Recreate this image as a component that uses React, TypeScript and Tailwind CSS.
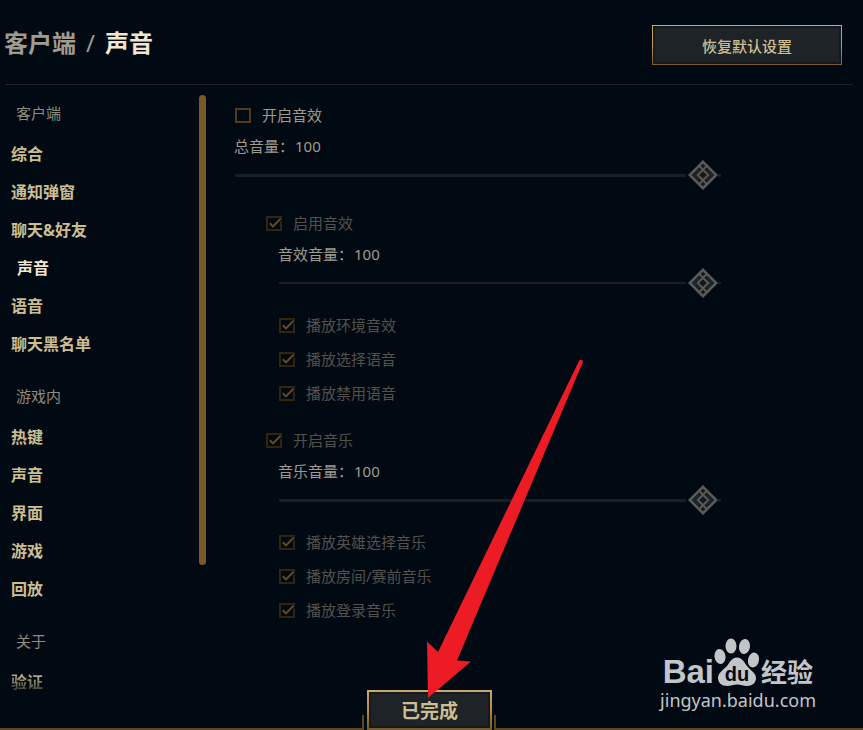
import React, { useState } from "react";
import clsx from "clsx";

const MENU = [
  {
    title: "客户端",
    items: ["综合", "通知弹窗", "聊天&好友", "声音", "语音", "聊天黑名单"],
  },
  { title: "游戏内", items: ["热键", "声音", "界面", "游戏", "回放"] },
  { title: "关于", items: ["验证"] },
];

const Header = () => (
  <header className="ml-1 mr-[10px] flex items-center justify-between pt-[25px] pr-[11px] pb-[19px]">
    <h1 className="flex items-center pb-1 text-2xl leading-9 font-bold">
      <span className="text-[#a09b8c]">客户端</span>
      <span className="mx-[10px] font-normal text-[#a09b8c]">/</span>
      <span className="text-[#f0e6d2]">声音</span>
    </h1>
    <button className="h-10 w-[190px] bg-linear-to-b from-[#c8aa6e] via-[#c89b3c] to-[#785a28] p-px">
      <span className="flex h-full items-center justify-center border-2 border-[#15191e] bg-[#1e2328] pt-[2px] text-[15px] font-medium text-[#cdbe91]">
        恢复默认设置
      </span>
    </button>
  </header>
);

const Sidebar = () => {
  const [active, setActive] = useState("0-3");
  return (
    <nav className="flex w-[199px] shrink-0 flex-col gap-[13px] pt-2">
      {MENU.map((group, g) => (
        <section key={group.title}>
          <h2 className="h-[42px] pl-4 text-[15px] leading-10 text-[#8f8b7e]">
            {group.title}
          </h2>
          <ul>
            {group.items.map((item, i) => {
              const id = `${g}-${i}`;
              return (
                <li key={id} className="h-[38px]">
                  <button
                    onClick={() => setActive(id)}
                    className={clsx(
                      "text-base leading-[38px] font-bold",
                      active === id
                        ? "pl-[17px] text-[#f0e6d2]"
                        : "pl-[11px]",
                      active !== id && g < 2 && "text-[#cdbe91]",
                      // last entry runs into the bottom fade
                      g === 2 &&
                        "bg-linear-to-b from-[#b5a982] from-35% to-[#3a3a35] to-75% bg-clip-text text-transparent"
                    )}
                  >
                    {item}
                  </button>
                </li>
              );
            })}
          </ul>
        </section>
      ))}
    </nav>
  );
};

type CheckProps = {
  label: string;
  dim?: boolean;
  defaultChecked?: boolean;
  className?: string;
};

const Check = ({ label, dim, defaultChecked, className }: CheckProps) => (
  <label
    className={clsx(
      "flex items-center gap-[11px] text-[15px]",
      dim ? "text-[#53514b]" : "text-[#a09b8c]",
      className
    )}
  >
    <span className="relative h-[15px] w-4 shrink-0">
      <input
        type="checkbox"
        defaultChecked={defaultChecked}
        className={clsx(
          "peer block h-full w-full appearance-none border-2",
          dim ? "border-[#33240f]" : "border-[#513c1a]"
        )}
      />
      <svg
        viewBox="0 0 16 15"
        className="pointer-events-none absolute inset-0 hidden peer-checked:block"
      >
        <path d="M3.5 7.5 7 10.8 14.8 2.8" fill="none" stroke="#010a13" strokeWidth="4" />
        <path d="M3.8 7.2 7 10.4 14.6 2.8" fill="none" stroke="#654b22" strokeWidth="2" />
      </svg>
    </span>
    <span>{label}</span>
  </label>
);

type VolumeProps = { label: string; thin?: boolean };

const Volume = ({ label, thin }: VolumeProps) => {
  const [value, setValue] = useState(100);
  return (
    <label className="block">
      <span className="block h-8 text-[15px] leading-[30px] text-[#a09b8c]">
        {label}：<span className="ml-px">{value}</span>
      </span>
      <span className="relative ml-px flex h-6 items-center">
        <span
          className={clsx("flex-1 bg-[#1a1e24]", thin ? "h-[2px]" : "h-[3px]")}
        />
        <svg viewBox="0 0 30 30" className="ml-[2px] h-[30px] w-[30px] shrink-0">
          <g fill="none" stroke="#5b5a56">
            <path d="M15 1.8 28.2 15 15 28.2 1.8 15Z" fill="#12181f" strokeWidth="2.6" />
            <path d="M11 9.5 6 15 11 20.5M19 9.5 24 15 19 20.5" stroke="#1f2429" strokeWidth="2.5" />
            <path d="M11.5 6.2 15 9.7 18.5 6.2M11.5 23.8 15 20.3 18.5 23.8" strokeWidth="2" />
            <path d="M15 9.7 20.3 15 15 20.3 9.7 15Z" strokeWidth="2" />
          </g>
        </svg>
        <span className={clsx("w-[3px] bg-[#1a1e24]", thin ? "h-[2px]" : "h-[3px]")} />
        <input
          type="range"
          min={0}
          max={100}
          value={value}
          onChange={(e) => setValue(Number(e.target.value))}
          className="absolute inset-0 w-full opacity-0"
        />
      </span>
    </label>
  );
};

type GroupProps = {
  title: string;
  volume: string;
  thin?: boolean;
  options: string[];
};

const SoundGroup = ({ title, volume, thin, options }: GroupProps) => (
  <section>
    <Check label={title} dim defaultChecked className="ml-8 h-8" />
    <div className="ml-11">
      <Volume label={volume} thin={thin} />
    </div>
    <div className="mt-[13px] ml-[45px]">
      {options.map((o) => (
        <Check key={o} label={o} dim defaultChecked className="h-[34px]" />
      ))}
    </div>
  </section>
);

const Footer = () => (
  <footer className="absolute inset-x-0 bottom-0 grid grid-cols-[364fr_auto_369fr] items-end">
    <div className="h-[15px] border-r-2 border-b-2 border-[#604619]" />
    <button className="mr-[2px] ml-[3px] h-10 w-[125px] bg-linear-to-b from-[#c8aa6e] via-[#b88d3c] to-[#785a28] p-[2px]">
      <span className="flex h-full items-center justify-center border-2 border-[#15191e] bg-[#1e2328] pt-[2px] text-[19px] leading-6 font-bold text-[#cdbe91]">
        已完成
      </span>
    </button>
    <div className="h-[15px] border-b-2 border-l-2 border-[#604619]" />
  </footer>
);

const Arrow = () => (
  <svg
    viewBox="0 0 160 345"
    className="pointer-events-none absolute top-[356px] left-[425px] h-[345px] w-40"
  >
    <path
      d="M154 5Q156 2 158 5L157 8 32 304.500 46 305.500 3 342 2 285.500 13 296Z"
      fill="#ed1c24"
    />
  </svg>
);

const Watermark = () => (
  <div className="pointer-events-none absolute right-[47px] bottom-[18px] text-[#c3c6c8]">
    <div className="flex h-12 items-end justify-end pr-[3px]">
      <span className="font-['Liberation_Sans',sans-serif] text-[33px] leading-7 font-bold">
        Bai
      </span>
      <svg viewBox="0 0 47 48" className="h-12 w-[47px]" fill="#c3c6c8">
        <ellipse cx="6" cy="18.5" rx="5.5" ry="7.5" transform="rotate(-8 6 18.5)" />
        <ellipse cx="17" cy="8" rx="5.5" ry="7.5" />
        <ellipse cx="30.5" cy="8.5" rx="5.5" ry="7.5" transform="rotate(8 30.5 8.5)" />
        <ellipse cx="39.5" cy="22" rx="5.5" ry="7.5" transform="rotate(12 39.5 22)" />
        <path d="M23 19.5C28 19.5 30 24 33 28 37 33 42 35 42 40 42 45 38 48 33 48 29 48 27 46.500 23 46.500S17 48 13 48C8 48 4 45 4 40 4 35 9 32 13 28 16 24 18 19.500 23 19.500Z" />
        <text
          x="23"
          y="43"
          textAnchor="middle"
          fontSize="20"
          fontWeight="bold"
          fontFamily="Liberation Sans, sans-serif"
          fill="#010a13"
        >
          du
        </text>
      </svg>
      <span className="text-[26px] leading-7 font-bold">经验</span>
    </div>
    <div className="mt-[2px] text-lg leading-6">jingyan.baidu.com</div>
  </div>
);

const App = () => {
  return (
    <div
      lang="zh-CN"
      className="relative min-h-screen overflow-hidden bg-[#010a13] font-['Noto_Sans','Noto_Sans_CJK_SC',sans-serif]"
    >
      <Header />
      <hr className="mr-[10px] ml-[5px] border-[#1e2328]" />
      <div className="flex items-start">
        <Sidebar />
        <div className="mt-[10px] h-[470px] w-[7px] shrink-0 rounded-full bg-[#785a28]" />
        <main className="ml-7 flex flex-1 flex-col pt-[14px] pr-[142px]">
          <Check label="开启音效" className="ml-px h-8" />
          <Volume label="总音量" />
          <div className="mt-5 flex flex-col gap-[14px]">
            <SoundGroup
              title="启用音效"
              volume="音效音量"
              thin
              options={["播放环境音效", "播放选择语音", "播放禁用语音"]}
            />
            <SoundGroup
              title="开启音乐"
              volume="音乐音量"
              options={["播放英雄选择音乐", "播放房间/赛前音乐", "播放登录音乐"]}
            />
          </div>
        </main>
      </div>
      <Footer />
      <Arrow />
      <Watermark />
    </div>
  );
};

export default App;
